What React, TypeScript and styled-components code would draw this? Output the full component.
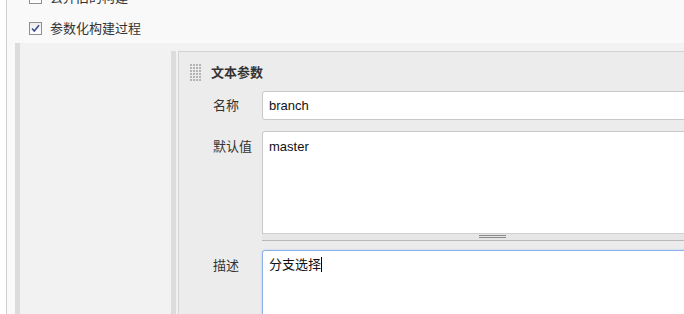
import React from "react";
import styled, { createGlobalStyle } from "styled-components";

const GlobalStyle = createGlobalStyle`
  html, body {
    margin: 0;
    padding: 0;
    background: #ffffff;
    overflow: hidden;
  }
  body {
    font-family: "Liberation Sans", "Noto Sans CJK SC", sans-serif;
    font-size: 13px;
    color: #333333;
  }
`;

const Viewport = styled.div`
  width: 684px;
  height: 314px;
  overflow: hidden;
  display: flex;
`;

const Section = styled.div`
  margin-left: 6px;
  width: 900px;
  flex-shrink: 0;
  border-left: 1px solid #cfcfcf;
  background: #f9f9f9;
  display: flex;
  flex-direction: column;
`;

const CheckList = styled.div`
  margin-top: -19px;
  padding-left: 22px;
  display: flex;
  flex-direction: column;
`;

const CheckRow = styled.label`
  height: 31px;
  display: flex;
  align-items: center;
  gap: 8px;
  line-height: 17px;
  color: #333333;
  padding-top: 1px;
  box-sizing: border-box;
`;

const Box = styled.span`
  width: 11px;
  height: 11px;
  border: 1px solid #8f8f8f;
  background: linear-gradient(#ececec, #ffffff);
  display: flex;
  align-items: center;
  justify-content: center;
  flex-shrink: 0;
`;

const Nested = styled.div`
  margin-left: 8px;
  flex: 1;
  border-left: 5px solid #dcdcdc;
  background: #f2f2f2;
  padding: 8px 0 0 151px;
  display: flex;
`;

const Strip = styled.div`
  width: 5px;
  background: #dcdcdc;
  margin-right: 2px;
  flex-shrink: 0;
`;

const Panel = styled.div`
  flex: 1;
  background: #ececec;
  border-top: 1px solid #d2d2d2;
  border-left: 1px solid #d6d6d6;
`;

const PanelHeader = styled.div`
  display: flex;
  align-items: center;
  gap: 9px;
  padding: 12px 0 9px 11px;
`;

const Title = styled.span`
  font-weight: bold;
  color: #333333;
  line-height: 18px;
`;

const FormRow = styled.div<{ $gap: number }>`
  display: grid;
  grid-template-columns: 49px 461px;
  padding-left: 34px;
  margin-bottom: ${(p) => p.$gap}px;
`;

const Label = styled.div<{ $top: number }>`
  padding-top: ${(p) => p.$top}px;
  line-height: 17px;
  color: #333333;
  white-space: nowrap;
`;

const Field = styled.div<{ $height: number; $focused?: boolean }>`
  box-sizing: border-box;
  height: ${(p) => p.$height}px;
  background: #ffffff;
  border: 1px solid ${(p) => (p.$focused ? "#8cb0ea" : "#c9c9c9")};
  border-radius: 3px;
  padding: 5px 6px;
  line-height: 17px;
  color: #111111;
  box-shadow: ${(p) => (p.$focused ? "0 0 2px rgba(120, 160, 230, 0.5)" : "none")};
`;

const AreaField = styled(Field)`
  border-bottom-left-radius: 0;
  border-bottom-right-radius: 0;
  border-bottom-color: #d0d0d0;
  padding-top: 6px;
`;

const Handle = styled.div`
  height: 5px;
  background: #e6e6e6;
  border-bottom: 1px solid #b8b8b8;
  display: flex;
  justify-content: center;
  padding-top: 1px;
  box-sizing: content-box;
`;

const HandleLines = styled.span`
  width: 27px;
  height: 1px;
  border-top: 1px solid #8a8a8a;
  border-bottom: 1px solid #8a8a8a;
`;

const Caret = styled.span`
  display: inline-block;
  width: 1px;
  height: 15px;
  background: #000000;
  vertical-align: -3px;
`;

function Check({ checked }: { checked?: boolean }) {
  return (
    <Box>
      {checked && (
        <svg width="9" height="9" viewBox="0 0 9 9">
          <path d="M1 4.5 L3.3 7 L8 1.3" fill="none" stroke="#3b4f8c" strokeWidth="1.6" />
        </svg>
      )}
    </Box>
  );
}

function Grip() {
  const dots = [];
  for (let r = 0; r < 6; r++) {
    for (let c = 0; c < 4; c++) {
      dots.push(<rect key={`${r}-${c}`} x={c * 3} y={r * 3} width="2" height="2" fill="#b4b4b4" />);
    }
  }
  return (
    <svg width="12" height="18" viewBox="0 0 12 18">
      {dots}
    </svg>
  );
}

export default function App() {
  return (
    <Viewport>
      <GlobalStyle />
      <Section>
        <CheckList>
          <CheckRow>
            <Check />
            丢弃旧的构建
          </CheckRow>
          <CheckRow>
            <Check checked />
            参数化构建过程
          </CheckRow>
        </CheckList>

        <Nested>
          <Strip />
          <Panel>
            <PanelHeader>
              <Grip />
              <Title>文本参数</Title>
            </PanelHeader>

            <FormRow $gap={11}>
              <Label $top={6}>名称</Label>
              <Field $height={29}>branch</Field>
            </FormRow>

            <FormRow $gap={9}>
              <Label $top={7}>默认值</Label>
              <div>
                <AreaField $height={103}>master</AreaField>
                <Handle>
                  <HandleLines />
                </Handle>
              </div>
            </FormRow>

            <FormRow $gap={0}>
              <Label $top={7}>描述</Label>
              <Field $height={120} $focused>
                分支选择
                <Caret />
              </Field>
            </FormRow>
          </Panel>
        </Nested>
      </Section>
    </Viewport>
  );
}
